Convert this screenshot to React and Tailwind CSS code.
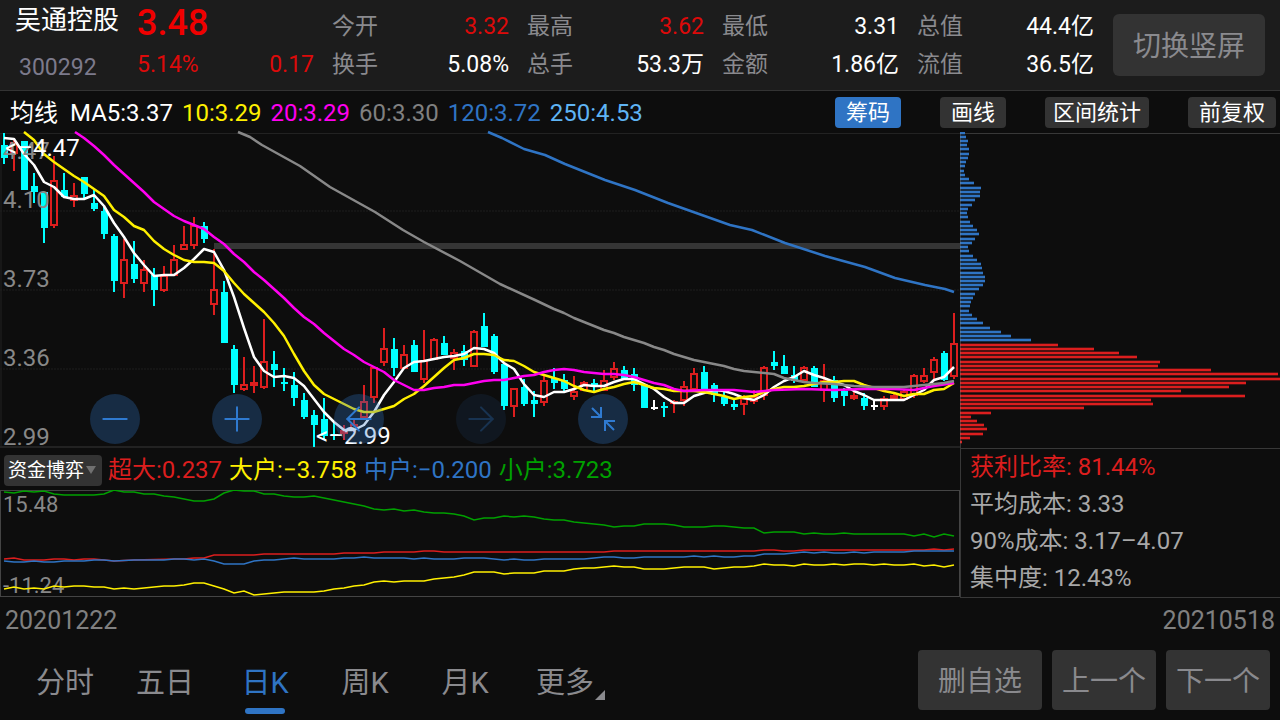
import { ArrowLeft, ArrowRight, Minus, Plus } from "lucide-react";
import clsx from "clsx";

const FONT = "font-['Roboto','Noto_Sans_CJK_SC',sans-serif]";

const QUOTES = [
    { label: "今开", value: "3.32", up: true },
    { label: "最高", value: "3.62", up: true },
    { label: "最低", value: "3.31" },
    { label: "总值", value: "44.4亿" },
    { label: "换手", value: "5.08%" },
    { label: "总手", value: "53.3万" },
    { label: "金额", value: "1.86亿" },
    { label: "流值", value: "36.5亿" },
];

const AVERAGES = [
    { text: "MA5:3.37", color: "text-white" },
    { text: "10:3.29", color: "text-[#fff000]" },
    { text: "20:3.29", color: "text-[#ff00f0]" },
    { text: "60:3.30", color: "text-[#808080]" },
    { text: "120:3.72", color: "text-[#2f74c4]" },
    { text: "250:4.53", color: "text-[#5fb4f4]" },
];

const FLOWS = [
    { text: "超大:0.237", color: "text-[#dc1e1e]" },
    { text: "大户:−3.758", color: "text-[#fff000]" },
    { text: "中户:−0.200", color: "text-[#2f74c4]" },
    { text: "小户:3.723", color: "text-[#00a000]" },
];

const COSTS = ["平均成本: 3.33", "90%成本: 3.17–4.07", "集中度: 12.43%"];

const PERIODS = ["分时", "五日", "日K", "周K", "月K", "更多"];

// [kind, high, bodyTop, bodyBottom, low] — u: up (hollow), d: down (filled), f: flat
const CANDLES = [
    ["d", 133, 145, 158, 164], ["u", 138, 142, 154, 171], ["d", 141, 141, 190, 190], ["d", 173, 186, 192, 203],
    ["d", 192, 192, 228, 243], ["u", 156, 180, 226, 228], ["d", 173, 190, 197, 197], ["u", 183, 195, 201, 207],
    ["d", 177, 177, 194, 198], ["d", 190, 203, 209, 211], ["d", 207, 211, 234, 239], ["d", 234, 236, 281, 292],
    ["u", 239, 259, 284, 298], ["d", 241, 264, 279, 283], ["u", 260, 269, 284, 292], ["d", 268, 275, 290, 306],
    ["u", 266, 275, 291, 292], ["u", 245, 259, 276, 276], ["u", 226, 244, 250, 250], ["u", 217, 225, 246, 249],
    ["d", 222, 226, 239, 243], ["u", 249, 289, 305, 315], ["d", 281, 292, 343, 343], ["d", 345, 349, 385, 393],
    ["u", 357, 384, 390, 391], ["u", 366, 382, 386, 393], ["u", 319, 361, 388, 389], ["d", 351, 364, 370, 387],
    ["d", 368, 382, 384, 391], ["d", 372, 385, 398, 406], ["d", 393, 400, 417, 419], ["d", 410, 415, 425, 447],
    ["d", 398, 419, 436, 440], ["d", 422, 434, 436, 440], ["u", 425, 430, 434, 440], ["u", 418, 424, 430, 432],
    ["u", 385, 401, 418, 418], ["u", 367, 367, 398, 403], ["u", 328, 348, 363, 366], ["d", 338, 349, 368, 376],
    ["u", 345, 354, 369, 369], ["d", 340, 345, 372, 372], ["u", 330, 360, 380, 383], ["u", 338, 339, 360, 360],
    ["d", 336, 343, 355, 355], ["u", 349, 352, 359, 370], ["d", 345, 351, 360, 366], ["u", 330, 331, 367, 367],
    ["d", 313, 326, 347, 347], ["d", 334, 336, 372, 374], ["d", 363, 364, 406, 410], ["u", 388, 388, 407, 417],
    ["d", 379, 387, 404, 406], ["d", 391, 400, 404, 417], ["u", 376, 380, 403, 406], ["d", 368, 378, 383, 389],
    ["d", 374, 380, 389, 391], ["u", 376, 391, 397, 400], ["u", 381, 382, 391, 391], ["d", 379, 383, 386, 391],
    ["u", 370, 380, 391, 391], ["u", 362, 368, 378, 380], ["d", 366, 370, 379, 379], ["d", 368, 374, 385, 391],
    ["d", 385, 385, 408, 408], ["f", 400, 407, 409, 410], ["d", 402, 406, 408, 417], ["u", 400, 401, 404, 413],
    ["u", 381, 386, 401, 406], ["u", 368, 373, 390, 390], ["d", 366, 372, 390, 392], ["d", 383, 385, 395, 402],
    ["d", 390, 397, 404, 406], ["d", 399, 404, 407, 410], ["u", 395, 398, 405, 415], ["u", 390, 396, 402, 404],
    ["u", 366, 367, 396, 400], ["d", 351, 362, 366, 370], ["d", 355, 366, 374, 374], ["d", 366, 375, 381, 383],
    ["u", 366, 367, 381, 381], ["d", 366, 368, 387, 387], ["u", 364, 380, 391, 402], ["d", 376, 380, 398, 402],
    ["d", 388, 391, 396, 406], ["u", 390, 395, 399, 400], ["d", 393, 398, 406, 410], ["f", 400, 405, 407, 410],
    ["u", 396, 398, 407, 410], ["u", 392, 395, 399, 400], ["u", 390, 391, 400, 401], ["u", 374, 375, 396, 398],
    ["u", 368, 375, 382, 383], ["u", 357, 359, 373, 380], ["d", 351, 353, 380, 381], ["u", 313, 343, 377, 379],
];

const MA5 = [
    138, 139, 154, 165, 182, 187, 197, 199, 199, 195, 206, 223, 237, 253, 265, 276, 275, 275, 268, 259, 249, 252, 270, 297,
    328, 357, 371, 377, 376, 378, 386, 399, 412, 422, 430, 430, 425, 412, 395, 382, 368, 362, 361, 359, 357, 356, 354, 348,
    349, 353, 363, 369, 384, 395, 397, 392, 392, 389, 385, 386, 386, 382, 379, 379, 384, 389, 397, 403, 403, 396, 393, 390,
    391, 394, 398, 400, 395, 387, 381, 377, 371, 375, 378, 382, 385, 391, 395, 400, 400, 400, 400, 395, 390, 380, 377, 367,
];

const MA10 = [
    118, 125, 132, 140, 154, 162, 169, 176, 182, 189, 196, 210, 217, 226, 230, 241, 249, 255, 260, 262, 262, 263, 271, 283,
    294, 303, 312, 323, 336, 354, 371, 385, 394, 399, 404, 409, 412, 412, 409, 406, 399, 394, 386, 377, 368, 360, 358, 354,
    354, 355, 360, 361, 366, 372, 375, 378, 381, 386, 390, 392, 389, 387, 384, 382, 385, 388, 389, 391, 391, 391, 392, 394,
    396, 399, 397, 396, 392, 389, 387, 387, 386, 384, 382, 382, 381, 381, 385, 388, 391, 393, 396, 394, 394, 390, 389, 383,
];

const MA20 =
    "75,132 84,138 94,146 104,155 114,165 124,174 134,183 144,192 154,202 164,209 174,216 184,221 194,225 204,229 214,237 " +
    "224,244 234,254 244,262 254,272 264,280 274,289 284,298 294,308 304,317 314,324 324,333 334,341 344,349 354,355 364,362 " +
    "374,367 384,372 394,380 404,385 414,390 424,390 434,388 444,387 454,385 464,385 474,383 484,381 494,380 504,380 514,378 " +
    "524,376 534,375 544,372 554,370 564,369 574,370 584,372 594,373 604,374 614,374 624,375 634,377 644,380 654,383 664,385 " +
    "674,389 684,391 704,390 734,390 754,392 774,390 804,389 834,390 864,389 894,389 914,390 934,386 954,383";

const MA60 =
    "238,132 250,137 262,145 300,166 330,187 375,212 403,230 424,242 460,261 500,284 535,300 554,309 564,313 574,318 584,322 " +
    "604,330 614,333 624,337 644,343 654,347 664,350 674,354 694,360 704,362 724,366 734,369 744,371 754,372 774,374 784,378 " +
    "794,380 804,382 814,383 834,384 854,386 874,387 904,387 924,385 944,383 954,381";

const MA120 =
    "488,132 502,138 524,149 545,155 565,164 605,180 635,190 668,203 730,225 752,230 785,243 825,256 865,267 895,278 925,285 " +
    "945,289 954,292";

// Chip distribution, one bar width per price level
const CHIPS = [
    5, 6, 8, 7, 9, 9, 8, 6, 5, 4, 5, 9, 14, 21, 20, 20, 15, 12, 8, 7, 8, 10, 13, 17, 19, 15, 12, 8, 9, 13, 17, 21, 22, 23, 25,
    25, 23, 19, 15, 13, 11, 10, 9, 12, 17, 23, 30, 41, 51, 71, 98, 134, 159, 177, 200, 198, 251, 318, 320, 286, 269, 221, 285,
    191, 193, 124, 31, 11, 17, 24, 27, 23, 10, 2,
];
const PROFIT_FROM = 50;

const FLOW_LINES = [
    {
        color: "#00a000",
        points:
            "4,492 14,493 24,491 34,492 44,491 54,494 64,495 94,495 104,494 114,490 124,492 134,492 144,494 154,494 164,496 174,497 " +
            "184,499 194,501 204,501 214,499 224,493 234,490 244,491 254,491 264,494 274,494 284,496 294,497 304,497 314,496 324,498 " +
            "334,500 344,502 354,504 364,506 374,509 384,510 394,509 404,511 414,510 424,512 434,513 444,513 454,514 464,516 474,520 " +
            "484,518 494,518 504,516 514,517 524,516 534,517 544,519 554,520 564,520 574,522 584,523 594,524 604,525 614,527 624,526 " +
            "634,526 644,524 664,524 674,525 684,527 704,527 714,526 724,526 734,527 744,528 754,528 764,533 774,532 794,532 804,534 " +
            "814,533 824,534 834,534 844,533 854,534 904,534 914,536 924,534 934,537 944,534 954,536",
    },
    {
        color: "#dc1e1e",
        points:
            "4,559 14,558 24,560 44,560 54,559 64,559 74,560 84,559 94,559 104,560 114,561 134,560 174,559 184,559 194,558 204,558 " +
            "214,555 254,555 264,554 334,554 344,553 374,553 384,552 414,552 424,551 434,551 444,552 604,552 614,551 754,551 764,550 " +
            "774,550 784,551 794,551 804,550 924,550 934,549 944,550 954,549",
    },
    {
        color: "#2f74c4",
        points:
            "4,561 14,562 24,562 34,561 44,562 54,562 64,561 84,561 94,560 104,560 114,561 134,560 164,560 174,559 184,559 194,560 " +
            "204,559 214,561 224,564 244,564 254,561 264,560 274,560 294,558 304,559 334,559 344,558 354,558 364,557 374,558 404,558 " +
            "414,559 424,558 434,559 454,559 464,558 484,558 494,559 504,560 514,559 524,560 534,560 544,559 584,559 594,558 604,557 " +
            "614,557 624,558 634,558 644,557 684,557 694,556 704,557 714,556 724,557 734,557 744,556 754,556 764,554 784,554 804,552 " +
            "814,553 824,552 834,553 844,553 854,552 864,553 874,552 904,552 914,551 954,551",
    },
    {
        color: "#fff000",
        points:
            "4,589 14,587 24,589 34,588 44,589 54,586 64,587 74,586 84,586 94,587 104,587 114,589 124,588 134,589 154,587 164,586 " +
            "174,586 184,585 194,583 204,583 214,586 224,589 234,593 244,591 254,595 264,594 284,592 314,592 324,591 334,589 344,588 " +
            "354,586 364,585 374,582 384,581 394,582 404,581 424,581 434,579 444,578 454,577 464,575 474,572 494,572 504,574 514,573 " +
            "534,573 544,571 564,571 574,569 584,568 594,568 604,567 614,566 624,567 634,567 644,569 664,569 674,568 684,567 704,567 " +
            "714,569 724,568 734,567 744,567 754,566 764,564 774,565 784,565 794,566 804,564 814,565 824,565 834,564 844,565 854,564 " +
            "864,564 874,565 884,564 894,565 904,565 914,564 924,566 934,565 944,567 954,565",
    },
];

const toPoints = (values) => values.map((y, i) => `${4 + i * 10},${y}`).join(" ");

function Candle({ x, candle }) {
    const [kind, high, top, bottom, low] = candle;
    if (kind === "u") {
        return (
            <g stroke="#dc1e1e" strokeWidth="2" fill="none">
                <path d={`M${x} ${high}V${top}M${x} ${bottom}V${low}`} />
                <rect x={x - 3} y={top + 1} width="6" height={Math.max(bottom - top - 2, 1)} />
            </g>
        );
    }
    return (
        <g fill={kind === "d" ? "#00ffff" : "#ffffff"}>
            <rect x={x - 1} y={high} width="2" height={low - high} />
            <rect x={x - 3} y={top} width="7" height={bottom - top} />
        </g>
    );
}

function KLineChart() {
    return (
        <svg viewBox="0 132 960 316" className="block w-full overflow-visible" fontSize="24">
            <path d="M0 133.5H960M1 133V447" stroke="#222222" fill="none" />
            <path d="M0 447H960" stroke="#222222" strokeWidth="2" />
            <path d="M0 211H960M0 290H960M0 369H960" stroke="#1f1f1f" strokeDasharray="2 1" />
            <rect x="214" y="243" width="746" height="6" fill="#353535" />
            {CANDLES.map((candle, i) => (
                <Candle key={i} x={4 + i * 10} candle={candle} />
            ))}
            <g fill="none" strokeWidth="2.5" strokeLinejoin="round">
                <polyline points={toPoints(MA5)} stroke="#ffffff" />
                {/* the first two values lie above the visible range */}
                <polyline points={toPoints(MA10).split(" ").slice(2).join(" ")} stroke="#fff000" />
                <polyline points={MA20} stroke="#ff00f0" />
                <polyline points={MA60} stroke="#888888" />
                <polyline points={MA120} stroke="#2f74c4" />
            </g>
            <g fill="#888888">
                <text x="3" y="159">4.47</text>
                <text x="3" y="208">4.10</text>
                <text x="3" y="287">3.73</text>
                <text x="3" y="366">3.36</text>
                <text x="3" y="445">2.99</text>
            </g>
            <g fill="#ffffff">
                <text x="5" y="156">&lt;–4.47</text>
                <text x="316" y="444">&lt;–2.99</text>
            </g>
        </svg>
    );
}

function ChipChart() {
    return (
        <svg viewBox="0 132 320 316" className="block w-full">
            <path d="M0 133.5H320" stroke="#383838" />
            {CHIPS.map((w, i) => {
                const y = 132 + Math.floor(i * 4.242 + 0.03);
                const color = i < PROFIT_FROM ? "#2f74c4" : "#dc1e1e";
                return (
                    <g key={i} fill={color}>
                        <rect x="0" y={y - 1} width={w} height="4" opacity="0.3" />
                        <rect x="0" y={y} width={w} height="2" />
                    </g>
                );
            })}
            <path d="M0.5 133V448" stroke="#888888" opacity="0.35" />
        </svg>
    );
}

function FlowChart() {
    return (
        <svg viewBox="0 490 960 108" className="block w-full" fontSize="22">
            <rect x="0.5" y="490.5" width="959" height="106" fill="none" stroke="#444444" />
            <g fill="#888888">
                <text x="3" y="512">15.48</text>
                <text x="3" y="593">-11.24</text>
            </g>
            {FLOW_LINES.map((line) => (
                <polyline key={line.color} points={line.points} fill="none" stroke={line.color} strokeWidth="1.5" />
            ))}
        </svg>
    );
}

function RoundButton({ label, disabled, children }) {
    return (
        <button
            type="button"
            aria-label={label}
            disabled={disabled}
            className="flex size-[50px] items-center justify-center rounded-full bg-[#2f74c4]/30 text-[#2f7ad0] disabled:opacity-35"
        >
            {children}
        </button>
    );
}

function ToolButton({ active, wide, children }) {
    return (
        <button
            type="button"
            className={clsx(
                "h-[31px] rounded-sm text-[22px] leading-[31px] text-white",
                wide ? "px-2" : "px-[11px]",
                active ? "bg-[#2f74c4]" : "bg-[#333333]"
            )}
        >
            {children}
        </button>
    );
}

function Header() {
    return (
        <header className="flex border-b border-[#333333] bg-[#1c1c1c] px-[15px] text-[23px] leading-[38px]">
            <div className="w-[122px]">
                <h1 className="text-[26px] leading-[40px] text-white">吴通控股</h1>
                <p className="pl-1 pt-[6px] leading-[44px] text-[#7c7a8c]">300292</p>
            </div>
            <div className="w-[195px] pr-[18px] text-[#dc0a0a]">
                <p className="text-[36px] font-medium leading-[46px] text-[#f00000]">3.48</p>
                <p className="flex justify-between">
                    <span>5.14%</span>
                    <span>0.17</span>
                </p>
            </div>
            <dl className="grid grow grid-cols-4 content-start gap-x-[18px] pt-2">
                {QUOTES.map((q) => (
                    <div key={q.label} className="flex justify-between">
                        <dt className="text-[#8a8a8e]">{q.label}</dt>
                        <dd className={q.up ? "text-[#dc0a0a]" : "text-white"}>{q.value}</dd>
                    </div>
                ))}
            </dl>
            <button
                type="button"
                className="ml-[19px] mt-[14px] h-[62px] w-[152px] rounded-md bg-[#333333] pt-1 text-[28px] text-[#8a8a8e]"
            >
                切换竖屏
            </button>
        </header>
    );
}

export default function App() {
    return (
        <div className={clsx("min-h-screen bg-[#0d0d0d]", FONT)}>
            <Header />

            <div className="flex h-[41px] items-center pl-[10px] pr-1 pt-[2px] text-2xl">
                <span className="text-white">均线</span>
                <div className="ml-3 flex grow gap-[9px]">
                    {AVERAGES.map((ma) => (
                        <span key={ma.text} className={ma.color}>{ma.text}</span>
                    ))}
                </div>
                <div className="flex gap-[39px]">
                    <ToolButton active>筹码</ToolButton>
                    <ToolButton>画线</ToolButton>
                    <ToolButton wide>区间统计</ToolButton>
                    <ToolButton>前复权</ToolButton>
                </div>
            </div>

            <main className="grid grid-cols-4">
                <section className="relative col-span-3">
                    <KLineChart />
                    <div className="absolute bottom-1 left-[90px] flex gap-[72px]">
                        <RoundButton label="缩小"><Minus size={40} strokeWidth={1.2} /></RoundButton>
                        <RoundButton label="放大"><Plus size={40} strokeWidth={1.2} /></RoundButton>
                        <RoundButton label="左移"><ArrowLeft size={40} strokeWidth={1.2} /></RoundButton>
                        <RoundButton label="右移" disabled><ArrowRight size={40} strokeWidth={1.2} /></RoundButton>
                        <RoundButton label="收起">
                            <svg viewBox="0 0 26 26" className="size-[26px]" fill="none" stroke="currentColor" strokeWidth="2">
                                <path d="M2 2L11 11M11 1V11H1M24 24L15 15M25 15H15V25" />
                            </svg>
                        </RoundButton>
                    </div>
                </section>
                <ChipChart />

                <section className="col-span-3">
                    <div className="flex h-[42px] items-center gap-[7px] pl-1 pt-[2px] text-2xl">
                        <div className="relative mr-[-1px]">
                            <select
                                aria-label="指标"
                                className="block h-[31px] w-[98px] appearance-none rounded-sm bg-[#333333] pl-1 text-[19px] leading-[31px] text-white"
                            >
                                <option>资金博弈</option>
                            </select>
                            <svg viewBox="0 0 10 8" className="pointer-events-none absolute right-[6px] top-[11px] h-2 w-[10px] fill-[#707070]">
                                <path d="M0 0H10L5 8Z" />
                            </svg>
                        </div>
                        {FLOWS.map((flow) => (
                            <span key={flow.text} className={flow.color}>{flow.text}</span>
                        ))}
                    </div>
                    <FlowChart />
                </section>
                <section className="border-y border-l border-[#383838] pl-[9px] text-2xl leading-[37px] text-[#a8a8a8]">
                    <p className="text-[#dc1e1e]">获利比率: 81.44%</p>
                    {COSTS.map((cost) => (
                        <p key={cost}>{cost}</p>
                    ))}
                </section>
            </main>

            <div className="flex justify-between px-[5px] text-[25px] leading-[45px] text-[#808080]">
                <span>20201222</span>
                <span>20210518</span>
            </div>

            <footer className="flex items-start justify-between pl-[15px] pr-[10px] pt-[7px]">
                <nav className="flex">
                    {PERIODS.map((p) => (
                        <button
                            key={p}
                            type="button"
                            className={clsx(
                                "relative h-[64px] w-[100px] pt-[3px] text-[29px]",
                                p === "日K" ? "text-[#2f74c4]" : "text-[#8a8a8e]"
                            )}
                        >
                            {p}
                            {p === "日K" && (
                                <span className="absolute bottom-0 left-1/2 h-[6px] w-[40px] -translate-x-1/2 rounded-full bg-[#2f74c4]" />
                            )}
                            {p === "更多" && (
                                <svg viewBox="0 0 10 10" className="absolute bottom-[14px] right-[10px] size-[10px] fill-current">
                                    <path d="M10 0V10H0Z" />
                                </svg>
                            )}
                        </button>
                    ))}
                </nav>
                <div className="flex gap-[10px] text-[28px] text-[#8a8a8e]">
                    <button type="button" className="h-[60px] rounded-sm bg-[#333333] px-5 pt-1">删自选</button>
                    <button type="button" className="h-[60px] rounded-sm bg-[#333333] px-[10px] pt-1">上一个</button>
                    <button type="button" className="h-[60px] rounded-sm bg-[#333333] px-[10px] pt-1">下一个</button>
                </div>
            </footer>
        </div>
    );
}
